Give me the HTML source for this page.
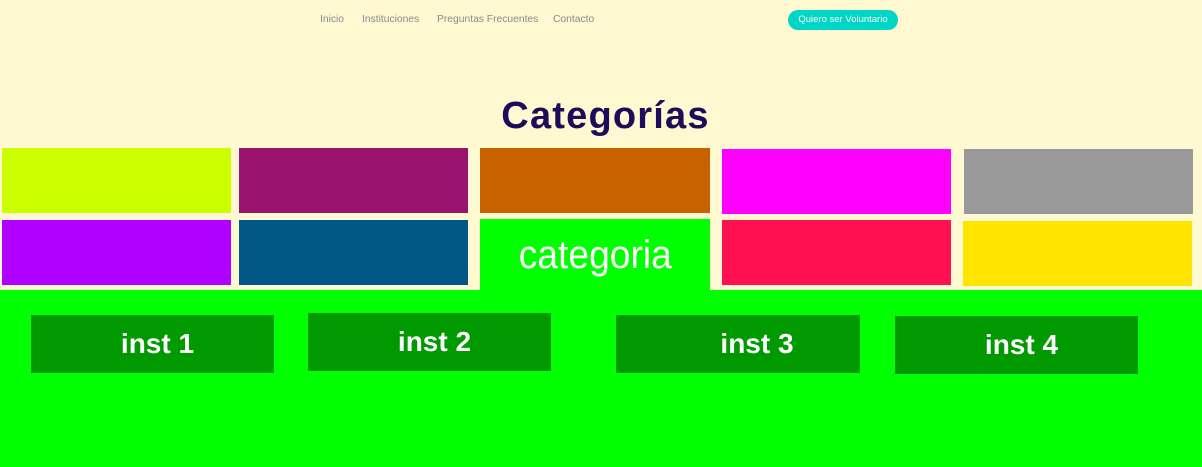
<!DOCTYPE html>
<html><head><meta charset="utf-8"><style>
*{margin:0;padding:0;box-sizing:border-box}
body{width:1202px;height:467px;background:#fef9d0;position:relative;overflow:hidden;font-family:"Liberation Sans",sans-serif}
.a{position:absolute}
.nav{top:14px;font-size:10.3px;color:#8a8a8a}
.btn{left:788px;top:10px;width:110px;height:20px;background:#00d6c6;border-radius:10px;color:#fff;font-size:9.5px;text-align:center;line-height:20px}
h1{position:absolute;left:0;width:1211px;top:95px;text-align:center;font-size:38px;color:#1d0b5c;font-weight:bold;letter-spacing:1.2px}
.c{position:absolute;height:65px}
.i{position:absolute;background:#009a00;color:#fff;font-size:28px;font-weight:bold;text-align:center;line-height:58px;height:58px;width:243px;padding-left:10px}
</style></head><body>
<div class="a nav" style="left:320px">Inicio</div>
<div class="a nav" style="left:362px">Instituciones</div>
<div class="a nav" style="left:437px">Preguntas Frecuentes</div>
<div class="a nav" style="left:553px">Contacto</div>
<div class="a btn">Quiero ser Voluntario</div>
<h1>Categorías</h1>
<div class="c" style="left:2px;top:148px;width:229px;background:#ccff00"></div>
<div class="c" style="left:239px;top:148px;width:229px;background:#99136e"></div>
<div class="c" style="left:480px;top:148px;width:230px;background:#c66300"></div>
<div class="c" style="left:722px;top:149px;width:229px;background:#ff00ff"></div>
<div class="c" style="left:964px;top:149px;width:229px;background:#999999"></div>
<div class="c" style="left:2px;top:220px;width:229px;background:#b000ff"></div>
<div class="c" style="left:239px;top:220px;width:229px;background:#015886"></div>
<div class="c" style="left:722px;top:220px;width:229px;background:#ff1050"></div>
<div class="c" style="left:963px;top:221px;width:229px;background:#ffe400"></div>
<div class="a" style="left:480px;top:219px;width:230px;height:80px;background:#00ff00;color:#fff;font-size:40px;text-align:center;line-height:72px"><span style="display:inline-block;transform:scaleX(0.93)">categoria</span></div>
<div class="a" style="left:0;top:290px;width:1202px;height:177px;background:#00ff00"></div>
<div class="i" style="left:31px;top:315px">inst 1</div>
<div class="i" style="left:308px;top:313px">inst 2</div>
<div class="i" style="left:616px;top:315px;width:244px;padding-left:38px">inst 3</div>
<div class="i" style="left:895px;top:316px">inst 4</div>
</body></html>
